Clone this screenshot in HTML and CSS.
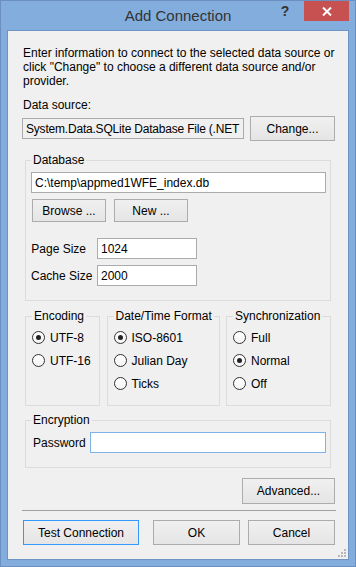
FILE: index.html
```html
<!DOCTYPE html>
<html lang="en">
<head>
    <meta charset="UTF-8">
    <meta name="viewport" content="width=device-width, initial-scale=1.0">
    <title>Add Connection</title>
    <link rel="stylesheet" href="styles.css">
</head>
<body>

    <div class="window">
        <div class="titlebar">
            <span></span>
            <div class="title">Add Connection</div>
            <div class="controls">
                <span class="help">?</span>
                <span class="close">
                    <svg width="10" height="9" viewBox="0 0 10 9">
                        <path d="M1 0.5 L9 8.5 M9 0.5 L1 8.5" stroke="#fff" stroke-width="2" fill="none"/>
                    </svg>
                </span>
            </div>
        </div>

        <div class="client">
            <p class="intro">Enter information to connect to the selected data source or<br>click "Change" to choose a different data source and/or<br>provider.</p>

            <div class="label">Data source:</div>
            <div class="source-row">
                <input class="textbox readonly" type="text" value="System.Data.SQLite Database File (.NET Framework Data Provider)" readonly>
                <button class="btn btn-change">Change...</button>
            </div>

            <fieldset class="group database">
                <legend>Database</legend>
                <input class="textbox" type="text" value="C:\temp\appmed1WFE_index.db">
                <div class="file-buttons">
                    <button class="btn btn-small">Browse ...</button>
                    <button class="btn btn-small">New ...</button>
                </div>
                <div class="size-grid">
                    <label>Page Size</label>
                    <input class="textbox" type="text" value="1024">
                    <label>Cache Size</label>
                    <input class="textbox" type="text" value="2000">
                </div>
            </fieldset>

            <div class="options">
                <fieldset class="group encoding">
                    <legend>Encoding</legend>
                    <div class="radio checked"><span class="dot"></span>UTF-8</div>
                    <div class="radio"><span class="dot"></span>UTF-16</div>
                </fieldset>
                <fieldset class="group datetime">
                    <legend>Date/Time Format</legend>
                    <div class="radio checked"><span class="dot"></span>ISO-8601</div>
                    <div class="radio"><span class="dot"></span>Julian Day</div>
                    <div class="radio"><span class="dot"></span>Ticks</div>
                </fieldset>
                <fieldset class="group sync">
                    <legend>Synchronization</legend>
                    <div class="radio"><span class="dot"></span>Full</div>
                    <div class="radio checked"><span class="dot"></span>Normal</div>
                    <div class="radio"><span class="dot"></span>Off</div>
                </fieldset>
            </div>

            <fieldset class="group encryption">
                <legend>Encryption</legend>
                <div class="password-row">
                    <label>Password</label>
                    <input class="textbox focused" type="password" value="">
                </div>
            </fieldset>

            <div class="advanced-row">
                <button class="btn btn-advanced">Advanced...</button>
            </div>

            <hr class="separator">

            <div class="actions">
                <button class="btn btn-default">Test Connection</button>
                <button class="btn btn-action">OK</button>
                <button class="btn btn-action">Cancel</button>
            </div>

            <svg class="grip" width="9" height="9" viewBox="0 0 9 9">
                <rect x="7" y="1" width="2" height="2" fill="#b8b8b8"/>
                <rect x="4" y="4" width="2" height="2" fill="#b8b8b8"/>
                <rect x="7" y="4" width="2" height="2" fill="#b8b8b8"/>
                <rect x="1" y="7" width="2" height="2" fill="#b8b8b8"/>
                <rect x="4" y="7" width="2" height="2" fill="#b8b8b8"/>
                <rect x="7" y="7" width="2" height="2" fill="#b8b8b8"/>
            </svg>
        </div>
    </div>

</body>
</html>
```

FILE: styles.css
```css
* {
    box-sizing: border-box;
}

body {
    margin: 0;
    font-family: 'Liberation Sans', Arial, sans-serif;
    font-size: 12px;
    color: #000;
    background: #82addd;
}

.window {
    width: 356px;
    height: 567px;
    border: 1px solid #6b8fbf;
    background: #82addd;
    display: flex;
    flex-direction: column;
}

/* title bar */
.titlebar {
    height: 29px;
    display: grid;
    grid-template-columns: 1fr auto 1fr;
    align-items: start;
}

.title {
    font-size: 15px;
    color: #333;
    line-height: 30px;
}

.controls {
    display: flex;
    justify-content: flex-end;
    padding-right: 6px;
}

.help {
    width: 22px;
    margin-right: 8px;
    text-align: center;
    font-size: 14px;
    font-weight: bold;
    color: #333;
    line-height: 20px;
}

.close {
    width: 45px;
    height: 20px;
    background: #c75050;
    display: flex;
    align-items: center;
    justify-content: center;
}

/* client area */
.client {
    position: relative;
    margin: 0 6px;
    height: 530px;
    background: #f0f0f0;
    border: 1px solid #6e94c4;
    padding: 15px 13px 0 14px;
}

.intro {
    margin: 0;
    line-height: 14px;
    white-space: nowrap;
    padding-left: 1px;
}

.label {
    margin-top: 10px;
    line-height: 14px;
    padding-left: 1px;
}

.textbox {
    font: inherit;
    color: #000;
    height: 21px;
    padding: 0 3px;
    border: 1px solid #ababab;
    background: #fff;
    outline: none;
    width: 100%;
}

.textbox.readonly {
    background: #f0f0f0;
    text-overflow: clip;
    letter-spacing: -0.2px;
}

.textbox.focused {
    border-color: #7eb4ea;
}

.btn {
    font: inherit;
    color: #000;
    border: 1px solid #acacac;
    background: linear-gradient(#f0f0f0, #e5e5e5);
    padding: 0;
    height: 25px;
    white-space: nowrap;
}

.source-row {
    margin-top: 4px;
    display: flex;
    align-items: center;
    gap: 6px;
}

.btn-change {
    width: 85px;
    flex-shrink: 0;
}

/* group boxes */
.group {
    margin: 0 4px 0 3px;
    border: 1px solid #dcdcdc;
    padding: 0 4px 0 5px;
}

.group legend {
    padding: 0 2px;
    line-height: 14px;
}

.database {
    margin-top: 12px;
    padding-top: 5px;
    padding-bottom: 14px;
}

.file-buttons {
    display: flex;
    gap: 8px;
    margin-top: 6px;
    padding-left: 1px;
}

.btn-small {
    width: 74px;
    height: 23px;
}

.size-grid {
    display: grid;
    grid-template-columns: 55px 100px;
    column-gap: 11px;
    row-gap: 6px;
    align-items: center;
    margin-top: 16px;
}

.size-grid label {
    text-align: right;
    white-space: nowrap;
}

.options {
    display: flex;
    justify-content: space-between;
    margin: 8px 4px 0 3px;
}

.options .group {
    margin: 0;
    padding: 3px 4px 10px 6px;
}

.encoding {
    width: 75px;
}

.datetime {
    width: 113px;
}

.sync {
    width: 105px;
}

.radio {
    height: 23px;
    display: flex;
    align-items: center;
    gap: 5px;
    white-space: nowrap;
}

.dot {
    width: 13px;
    height: 13px;
    border: 1px solid #333;
    border-radius: 50%;
    background: linear-gradient(#fff, #f4f4f4);
    display: flex;
    align-items: center;
    justify-content: center;
    flex-shrink: 0;
}

.radio.checked .dot::after {
    content: "";
    width: 5px;
    height: 5px;
    border-radius: 50%;
    background: #222;
}

.encryption {
    margin-top: 7px;
    padding-top: 5px;
    padding-bottom: 14px;
}

.password-row {
    display: grid;
    grid-template-columns: 59px 1fr;
    align-items: center;
}

.password-row label {
    padding-left: 2px;
}

.password-row .textbox {
    height: 21px;
}

.advanced-row {
    display: flex;
    justify-content: flex-end;
    margin-top: 10px;
}

.btn-advanced {
    width: 93px;
    height: 26px;
}

.separator {
    margin: 6px -1px 0 0;
    border: none;
    border-top: 1px solid #a0a0a0;
}

.actions {
    display: flex;
    gap: 8px;
    margin-top: 9px;
    padding-left: 1px;
}

.btn-default {
    width: 116px;
    border-color: #3399ff;
    margin-right: auto;
}

.btn-action {
    width: 87px;
}

.grip {
    position: absolute;
    right: 2px;
    bottom: 2px;
}
```
